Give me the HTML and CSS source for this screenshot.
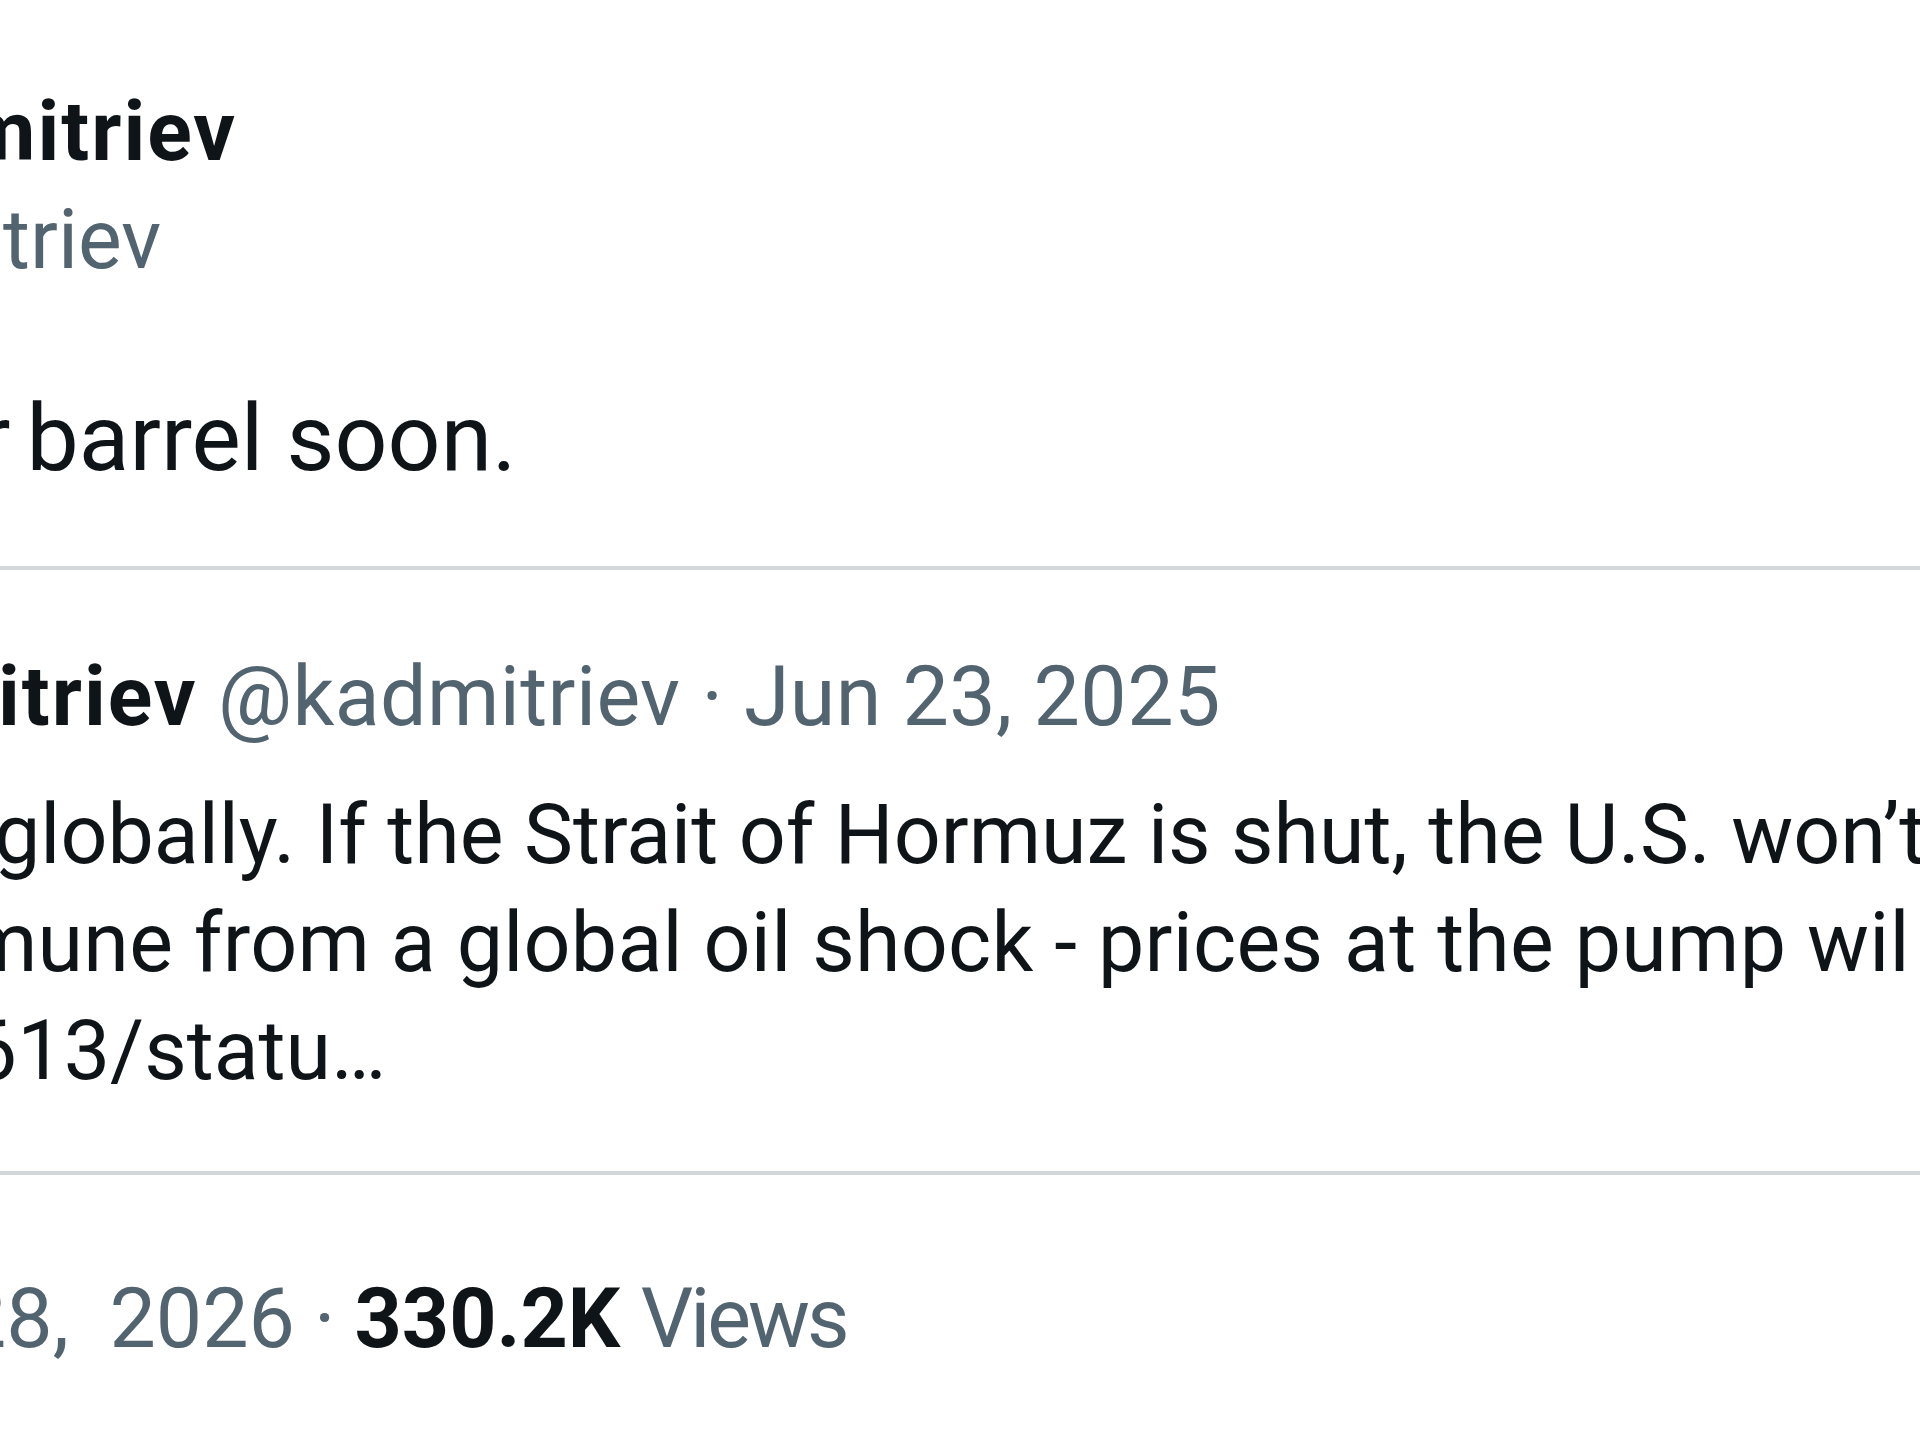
FILE: index.html
```html
<!DOCTYPE html>
<html lang="en">
<head>
<meta charset="utf-8">
<title>Post</title>
<link rel="stylesheet" href="styles.css">
</head>
<body>
<main class="page">
  <article class="tweet">
    <header class="author">
      <div class="name"><span class="name-clip">mitriev</span></div>
      <div class="handle"><span class="handle-clip">triev</span></div>
    </header>
    <div class="text"><span class="cut-r">r</span> barrel soon.</div>
    <section class="quote">
      <div class="q-head"><span class="q-name">itriev</span> <span class="q-handle">@kadmitriev</span><span class="sep">·</span><span class="q-date">Jun 23, 2025</span></div>
      <div class="q-body">
        <div class="q-line q-l1">globally. If the Strait of Hormuz is shut, the U.S. won’t</div>
        <div class="q-line q-l2">mune from a global oil shock - prices at the pump wil</div>
        <div class="q-line q-l3">613/statu…</div>
      </div>
    </section>
    <div class="meta"><span class="meta-date">28, 2026</span><span class="sep sep-meta">·</span><span class="views-num">330.2K</span> <span class="views-label">Views</span></div>
  </article>
</main>
</body>
</html>
```
FILE: styles.css
```css
html, body {
  margin: 0;
  padding: 0;
  background: #ffffff;
}
body {
  width: 1920px;
  height: 1435px;
  overflow: hidden;
  font-family: Roboto, "Liberation Sans", Arial, sans-serif;
  color: #0f1419;
}
.page {
  padding-top: 78px;
}
.tweet {
  display: flex;
  flex-direction: column;
}
.author {
  display: flex;
  flex-direction: column;
}
.name, .handle, .q-head, .q-line, .meta {
  font-size: 82.5px;
  line-height: 108px;
  height: 108px;
  white-space: nowrap;
}
.name {
  font-weight: 700;
  letter-spacing: 2px;
}
.name-clip {
  margin-left: -36px;
}
.handle {
  color: #536471;
}
.handle-clip {
  margin-left: 3px;
}
.text {
  margin-top: 83px;
  font-size: 93px;
  line-height: 124px;
  height: 124px;
  white-space: nowrap;
}
.cut-r {
  margin-left: -21px;
  margin-right: -7px;
}
.quote {
  margin-top: 65px;
  border-top: 4px solid #d3d7da;
  border-bottom: 4px solid #d3d7da;
  padding-top: 73px;
  padding-bottom: 66px;
}
.q-name {
  font-weight: 700;
  letter-spacing: 2px;
  margin-left: -2px;
}
.q-handle, .q-date, .meta-date, .views-label, .sep {
  color: #536471;
}
.q-handle, .q-date {
  letter-spacing: 0.4px;
}
.sep {
  padding: 0 21px;
}
.q-body {
  margin-top: 30px;
  display: flex;
  flex-direction: column;
}
.q-l1 {
  margin-left: -6px;
}
.q-l2 {
  margin-left: -35px;
  letter-spacing: 0.25px;
}
.q-l3 {
  margin-left: -29px;
}
.meta {
  margin-top: 90px;
}
.meta-date {
  margin-left: -40px;
  word-spacing: 20px;
}
.sep-meta {
  padding: 0 19px;
}
.views-num {
  font-weight: 700;
  color: #0f1419;
}
.views-label {
  letter-spacing: -3px;
}
```
